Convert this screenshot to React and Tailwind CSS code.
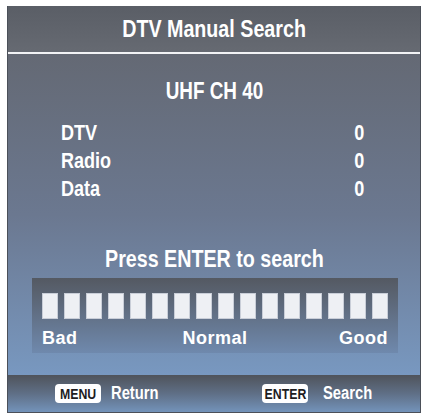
const sans = { fontFamily: '"Liberation Sans", Arial, sans-serif' };

const counts = [
  { label: "DTV", value: 0 },
  { label: "Radio", value: 0 },
  { label: "Data", value: 0 },
];

// the OSD font is a condensed grotesk; squeeze Liberation Sans to match
function N({ children, origin = "origin-center" }) {
  return <span className={`inline-block scale-x-[0.82] ${origin}`}>{children}</span>;
}

function Key({ name }) {
  return (
    <span className="inline-flex items-center justify-center w-[46px] h-[19px] rounded-[4px] bg-white text-[#1d1d1f] text-[15px] font-bold leading-none">
      <N>{name}</N>
    </span>
  );
}

export default function App() {
  return (
    <div className="w-[430px] h-[419px] bg-white pt-[6px] pl-[7px]" style={sans}>
      <div className="w-[414px] h-[407px] flex flex-col border-l border-r border-b border-[#4b5059] overflow-hidden">
        {/* title */}
        <div className="h-[46px] shrink-0 flex items-center justify-center bg-gradient-to-b from-[#5a5e66] to-[#666a72] text-white text-[24px] font-bold">
          <N>DTV Manual Search</N>
        </div>
        <div className="h-[2px] shrink-0 bg-[#f2f3f5]" />

        {/* body */}
        <div className="flex-1 flex flex-col bg-gradient-to-b from-[#646974] via-[#6b7890] to-[#7898c0] text-white font-bold">
          <div className="mt-[26px] text-center text-[23px] leading-none">
            <N>UHF CH 40</N>
          </div>

          <div className="mt-[16px] pl-[53px] pr-[56px] text-[22px] leading-[28px]">
            {counts.map((c) => (
              <div key={c.label} className="flex justify-between">
                <N origin="origin-left">{c.label}</N>
                <N origin="origin-right">{c.value}</N>
              </div>
            ))}
          </div>

          <div className="mt-[44px] text-center text-[24px] leading-none">
            <N>Press ENTER to search</N>
          </div>

          <div className="mt-[7px] ml-[24px] w-[366px] h-[75px] px-[10px] pt-[15px] bg-gradient-to-b from-[#545962] to-[#6f89ad]">
            <div className="flex gap-[6px]">
              {Array.from({ length: 16 }).map((_, i) => (
                <div key={i} className="w-[16px] h-[26px] bg-[#eef0f4] border border-[#c9ced8]" />
              ))}
            </div>
            <div className="mt-[10px] grid grid-cols-3 text-[18px] leading-none tracking-[0.5px]">
              <span>Bad</span>
              <span className="text-center">Normal</span>
              <span className="text-right">Good</span>
            </div>
          </div>
        </div>

        {/* footer */}
        <div className="h-[37px] shrink-0 flex items-center bg-gradient-to-b from-[#4f535b] via-[#5f6f86] to-[#7393ba] text-white text-[18px] font-bold">
          <div className="w-[206px] pl-[47px] flex items-center gap-[10px]">
            <Key name="MENU" />
            <N origin="origin-left">Return</N>
          </div>
          <div className="pl-[48px] flex items-center gap-[15px]">
            <Key name="ENTER" />
            <N origin="origin-left">Search</N>
          </div>
        </div>
      </div>
    </div>
  );
}
